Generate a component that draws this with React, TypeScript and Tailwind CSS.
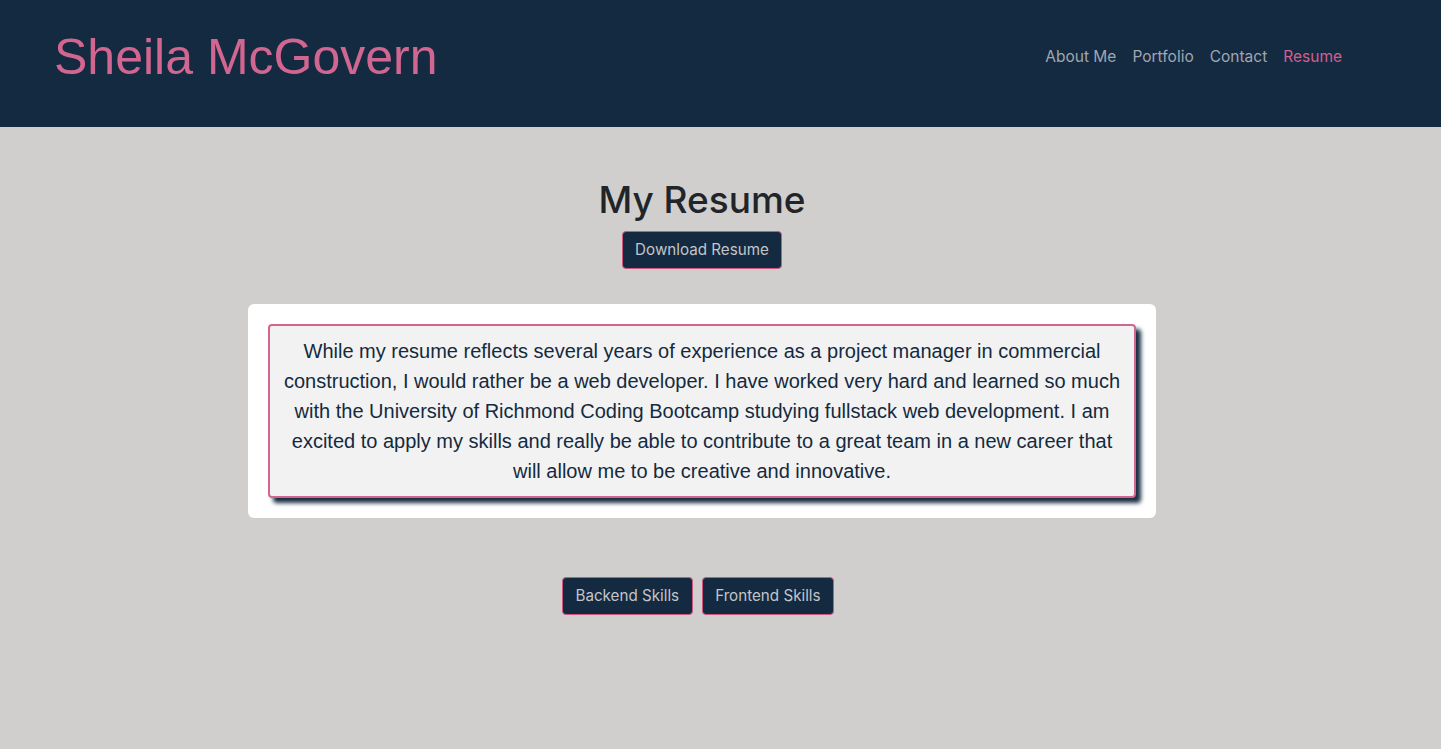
import React from "react";

const navItems = ["About Me", "Portfolio", "Contact", "Resume"];

function SkillButton({ label }: { label: string }) {
  return (
    <button className="h-[38px] rounded-[4px] border border-[#d1567f] bg-[#132a40] px-[12.5px] text-[15.2px] text-[#c3c5c8]">
      {label}
    </button>
  );
}

export default function App() {
  return (
    <div className="min-h-[749px] bg-[#d0cfcd] font-['Inter',sans-serif]">
      <header className="flex h-[127px] items-center justify-between bg-[#142a40] pb-[13px] pl-[54px] pr-[91px]">
        <h1 className="font-['Liberation_Sans',Arial,sans-serif] text-[50px] leading-none text-[#d16691]">
          Sheila McGovern
        </h1>
        <nav className="flex items-center">
          {navItems.map((item) => (
            <a
              key={item}
              href="#"
              className={`px-2 text-[15.5px] ${
                item === "Resume" ? "text-[#d1608e]" : "text-[#a0a7b0]"
              }`}
            >
              {item}
            </a>
          ))}
        </nav>
      </header>

      <main className="flex flex-col items-center pr-[37px] pt-[49px]">
        <h2 className="text-[37px] font-medium leading-[48px] text-[#212529]">My Resume</h2>
        <button className="mt-[7px] h-[38px] rounded-[4px] border border-[#d1567f] bg-[#132a40] px-3 text-[15.2px] text-[#c3c5c8]">
          Download Resume
        </button>

        <section className="mt-[35px] w-[908px] rounded-[6px] bg-white p-[20px]">
          <div className="rounded-[4px] border-2 border-[#d16691] bg-[#f2f2f2] px-[9px] pt-[10px] pb-[10px] text-center font-['Liberation_Sans',Arial,sans-serif] text-[20px] leading-[30px] text-[#142a40] shadow-[5px_5px_4px_#1b2e43]">
            While my resume reflects several years of experience as a project manager in commercial
            construction, I would rather be a web developer. I have worked very hard and learned so
            much with the University of Richmond Coding Bootcamp studying fullstack web development.
            I am excited to apply my skills and really be able to contribute to a great team in a new
            career that will allow me to be creative and innovative.
          </div>
        </section>

        <div className="mr-[8px] mt-[59px] flex gap-[9px]">
          <SkillButton label="Backend Skills" />
          <SkillButton label="Frontend Skills" />
        </div>
      </main>
    </div>
  );
}
